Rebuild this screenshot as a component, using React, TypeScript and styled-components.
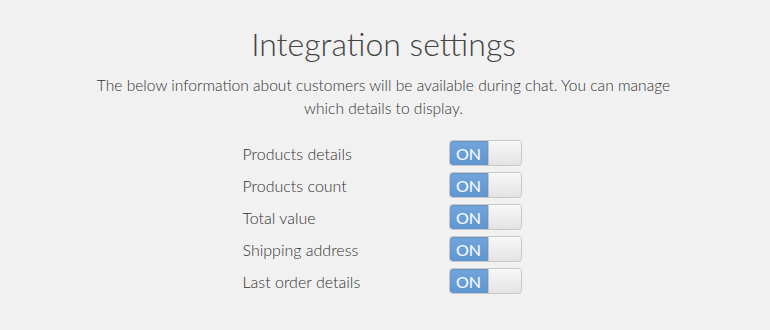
import React from "react";
import styled, { createGlobalStyle } from "styled-components";

const Global = createGlobalStyle`
  html, body { margin: 0; padding: 0; background: #f1f1f1; }
  body { font-family: Lato, "Open Sans", sans-serif; }
`;

const Page = styled.div`
  display: flex;
  flex-direction: column;
  align-items: center;
  padding: 24px 3px 0 0;
`;

const Title = styled.h1`
  margin: 0;
  font-weight: 300;
  font-size: 32px;
  line-height: 40px;
  color: #444;
`;

const Lead = styled.p`
  margin: 10px 0 0;
  width: 600px;
  text-align: center;
  font-size: 15.6px;
  font-weight: 300;
  line-height: 23px;
  color: #333;
`;

const List = styled.div`
  width: 279px;
  margin: 20px 3px 0 0;
  display: flex;
  flex-direction: column;
  gap: 6px;
`;

const Row = styled.div`
  display: flex;
  align-items: center;
  justify-content: space-between;
  height: 26px;
`;

const Label = styled.span`
  font-size: 16px;
  font-weight: 300;
  color: #333;
`;

const Toggle = styled.div`
  display: flex;
  width: 73px;
  height: 26px;
  box-sizing: border-box;
  border: 1px solid #c8c8c8;
  border-radius: 4px;
  overflow: hidden;
`;

const OnPart = styled.div`
  width: 38px;
  display: flex;
  align-items: center;
  justify-content: center;
  background: linear-gradient(#72a6dc, #5f95d0);
  color: #fff;
  font-size: 16px;
  font-weight: 400;
  box-shadow: inset 0 1px 2px rgba(0,0,0,0.12);
`;

const Knob = styled.div`
  flex: 1;
  background: linear-gradient(#f8f8f8, #e3e3e3);
  border-left: 1px solid #c8c8c8;
  border-radius: 0 3px 3px 0;
`;

const items = [
  "Products details",
  "Products count",
  "Total value",
  "Shipping address",
  "Last order details",
];

export default function App() {
  return (
    <>
      <Global />
      <Page>
        <Title>Integration settings</Title>
        <Lead>
          The below information about customers will be available during chat. You can manage which details to display.
        </Lead>
        <List>
          {items.map((t) => (
            <Row key={t}>
              <Label>{t}</Label>
              <Toggle>
                <OnPart>ON</OnPart>
                <Knob />
              </Toggle>
            </Row>
          ))}
        </List>
      </Page>
    </>
  );
}
